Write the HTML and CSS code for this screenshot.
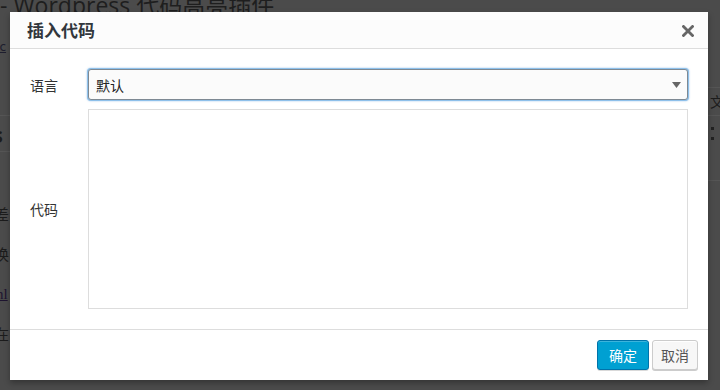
FILE: index.html
```html
<!DOCTYPE html>
<html lang="zh">
<head>
<meta charset="utf-8">
<title>插入代码</title>
<link rel="stylesheet" href="styles.css">
</head>
<body>
<div class="page">
  <div class="bg-title">- Wordpress 代码高亮插件</div>
  <div class="bg-link">.c</div>
  <div class="bg-rule bg-rule-a"></div>
  <div class="bg-bold">s</div>
  <div class="bg-rule bg-rule-b"></div>
  <div class="bg-line bg-first">差</div>
  <div class="bg-line">换</div>
  <div class="bg-line bg-purple">nl</div>
  <div class="bg-line">在</div>
  <div class="bg-right">
    <div class="bg-rule"></div>
    <div class="bg-wen">文</div>
    <div class="bg-rule"></div>
    <div class="bg-sq"></div>
    <div class="bg-sq"></div>
    <div class="bg-rule bg-rule-c"></div>
  </div>
</div>

<div class="modal">
  <div class="modal-head">
    <div class="modal-title">插入代码</div>
    <svg class="close" width="12" height="12" viewBox="0 0 12 12">
      <path d="M1.5 1.5 L10.5 10.5 M10.5 1.5 L1.5 10.5" stroke="#666" stroke-width="2.8" stroke-linecap="square"/>
    </svg>
  </div>
  <div class="modal-body">
    <div class="row">
      <div class="label">语言</div>
      <div class="select">
        <span>默认</span>
        <svg class="caret" width="9" height="6" viewBox="0 0 9 6"><path d="M0 0 H9 L4.5 6 Z" fill="#666"/></svg>
      </div>
    </div>
    <div class="row row-code">
      <div class="label">代码</div>
      <div class="textarea"></div>
    </div>
  </div>
  <div class="modal-foot">
    <button class="btn btn-primary">确定</button>
    <button class="btn btn-default">取消</button>
  </div>
</div>
</body>
</html>
```
FILE: styles.css
```css
html, body {
  margin: 0;
  padding: 0;
  width: 720px;
  height: 390px;
  overflow: hidden;
  background: #4b4b4b;
  font-family: "Noto Sans CJK SC", "Open Sans", sans-serif;
}
body { position: relative; }

.page {
  position: relative;
  width: 720px;
  height: 390px;
  color: #1c1c1c;
  display: flex;
  flex-direction: column;
  align-items: flex-start;
}
.bg-title {
  font-family: "Open Sans", "Noto Sans CJK SC", sans-serif;
  font-weight: 400;
  font-size: 23px;
  line-height: 22px;
  margin-top: -6px;
  white-space: nowrap;
  color: #1e1e1e;
  height: 22px;
}
.bg-link {
  font-size: 13px;
  line-height: 14px;
  height: 14px;
  margin-top: 23px;
  margin-left: -4px;
  text-decoration: underline;
  color: #1e1e2e;
}
.bg-rule {
  height: 1px;
  width: 10px;
  background: #555;
}
.bg-rule-a { margin-top: 62px; }
.bg-bold {
  font-family: "Open Sans", sans-serif;
  font-weight: 700;
  font-size: 22px;
  line-height: 22px;
  height: 22px;
  margin-top: 7px;
  margin-left: -8px;
}
.bg-rule-b { margin-top: 6px; }
.bg-line {
  font-size: 15px;
  line-height: 18px;
  height: 18px;
  margin-left: -6px;
  margin-top: 22px;
}
.bg-first { margin-top: 53px; }
.bg-purple {
  text-decoration: underline;
  color: #1e1430;
  font-family: "Liberation Serif", serif;
  margin-left: -4px;
}
.bg-right {
  position: absolute;
  left: 708px;
  top: 87px;
  width: 12px;
}
.bg-right .bg-rule { width: 12px; }
.bg-wen {
  font-size: 14px;
  line-height: 27px;
  margin-left: 2px;
}
.bg-sq {
  width: 3px;
  height: 3px;
  background: #222;
  margin: 11px 0 0 3px;
}
.bg-sq + .bg-sq { margin-top: 7px; }
.bg-rule-c { margin-top: 40px; }

.modal {
  position: absolute;
  left: 10px;
  top: 12px;
  width: 698px;
  height: 368px;
  background: #fff;
  display: flex;
  flex-direction: column;
  box-shadow: 0 3px 6px rgba(0,0,0,0.3);
}
.modal-head {
  height: 36px;
  background: #fcfcfc;
  border-bottom: 1px solid #dddddd;
  display: flex;
  align-items: center;
  justify-content: space-between;
  padding: 0 14px 0 17px;
}
.modal-title {
  font-size: 17px;
  font-weight: 700;
  color: #32373c;
  line-height: 20px;
}
.close { display: block; margin-top: 1px; }

.modal-body {
  height: 280px;
  box-sizing: border-box;
  padding: 20px;
  display: flex;
  flex-direction: column;
  gap: 9px;
}
.row {
  display: flex;
  align-items: center;
}
.label {
  width: 58px;
  font-size: 14px;
  color: #333;
  line-height: 18px;
}
.select {
  flex: 1;
  height: 31px;
  box-sizing: border-box;
  border: 1px solid #7e8993;
  border-radius: 3px;
  background: #fbfbfb;
  box-shadow: 0 0 0 1px #8ec0ea, 0 0 2px 1px rgba(91,157,217,0.6);
  display: flex;
  align-items: center;
  justify-content: space-between;
  padding: 0 6px 0 7px;
  font-size: 14px;
  color: #222;
}
.caret { display: block; }
.textarea {
  flex: 1;
  height: 200px;
  box-sizing: border-box;
  border: 1px solid #dddddd;
  background: #fff;
}

.modal-foot {
  height: 50px;
  border-top: 1px solid #dddddd;
  display: flex;
  align-items: center;
  justify-content: flex-end;
  gap: 3px;
  padding: 0 10px;
}
.btn {
  height: 30px;
  box-sizing: border-box;
  border-radius: 3px;
  font-family: "Noto Sans CJK SC", sans-serif;
  font-size: 14px;
  line-height: 26px;
  padding: 0;
  margin: 0;
  cursor: pointer;
}
.btn-primary {
  width: 52px;
  background: #00a0d2;
  border: 1px solid #0073aa;
  color: #fff;
  box-shadow: inset 0 1px 0 rgba(120,200,230,0.5), 0 1px 0 rgba(0,0,0,0.15);
}
.btn-default {
  width: 46px;
  background: #f7f7f7;
  border: 1px solid #cccccc;
  color: #555;
  box-shadow: inset 0 1px 0 #fff, 0 1px 0 #ccc;
}
```
